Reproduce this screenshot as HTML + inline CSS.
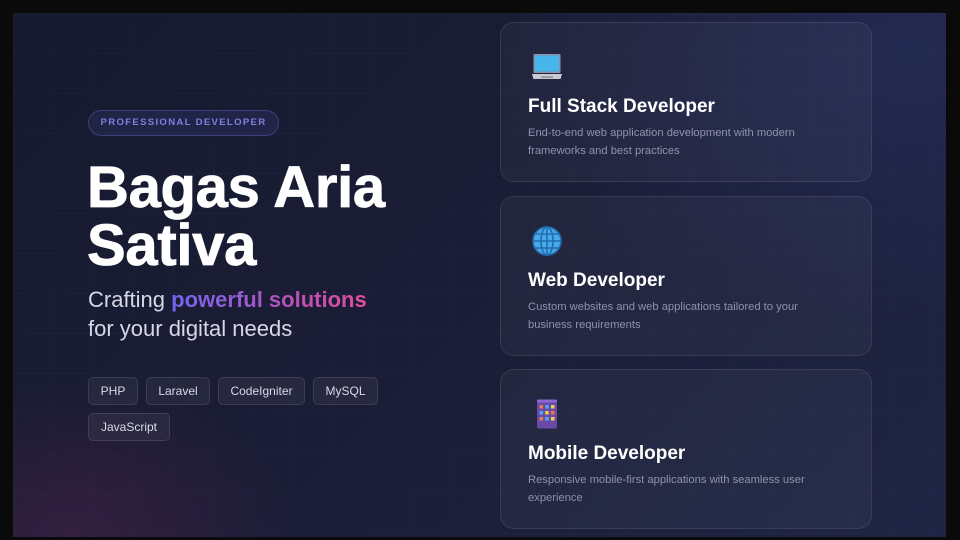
<!DOCTYPE html>
<html><head><meta charset="utf-8"><style>
*{margin:0;padding:0;box-sizing:border-box}
html,body{width:960px;height:540px;background:#0a0a0b;overflow:hidden;font-family:"Liberation Sans",sans-serif}
.main{position:absolute;left:13px;top:13px;width:933px;height:524px;overflow:hidden;
background:radial-gradient(ellipse 320px 220px at 60px 520px,rgba(90,35,80,.4),transparent 70%),
radial-gradient(ellipse 600px 400px at 900px 40px,rgba(40,50,100,.55),transparent 70%),
linear-gradient(135deg,#151a2e 0%,#1b1d36 50%,#1e2544 100%);}
.grid{position:absolute;inset:0;background-image:linear-gradient(rgba(255,255,255,.018) 1px,transparent 1px),linear-gradient(90deg,rgba(255,255,255,.018) 1px,transparent 1px);background-size:40px 40px}
.badge{position:absolute;left:75px;top:97px;width:191px;height:26px;border-radius:13px;border:1px solid rgba(110,115,220,.35);background:rgba(90,95,200,.14);color:#7c80e0;font-size:9.6px;font-weight:bold;letter-spacing:1.3px;text-align:center;line-height:24px;white-space:nowrap}
h1{position:absolute;left:74px;top:146px;color:#fff;font-size:58px;font-weight:bold;line-height:58px;letter-spacing:-0.3px;white-space:nowrap;-webkit-text-stroke:0.8px #fff}
.sub{position:absolute;left:75px;top:272px;color:#d6d8e6;font-size:22px;line-height:29px;white-space:nowrap}
.sub b{background:linear-gradient(90deg,#6e67f0,#c04fb0 70%,#e0509a);-webkit-background-clip:text;background-clip:text;color:transparent}
.tag{position:absolute;height:28px;border-radius:5px;border:1px solid rgba(255,255,255,.1);background:rgba(255,255,255,.05);color:#d8dae6;font-size:12px;line-height:26px;text-align:center}
.card{position:absolute;left:487px;width:372px;height:160px;border-radius:14px;border:1px solid rgba(255,255,255,.09);background:rgba(255,255,255,.04)}
.card svg{position:absolute;left:30px;top:28px}
.card h2{position:absolute;left:27px;top:73px;color:#fff;font-size:19px;font-weight:bold}
.card p{position:absolute;left:27px;top:102px;width:300px;color:#8d93ad;font-size:11.2px;line-height:17.5px}
</style></head><body>
<div class="main"><div class="grid"></div>
<div class="badge">PROFESSIONAL DEVELOPER</div>
<h1>Bagas Aria<br>Sativa</h1>
<div class="sub">Crafting <b>powerful solutions</b><br>for your digital needs</div>
<div class="tag" style="left:75px;top:364px;width:50px">PHP</div>
<div class="tag" style="left:133px;top:364px;width:64px">Laravel</div>
<div class="tag" style="left:205px;top:364px;width:87px">CodeIgniter</div>
<div class="tag" style="left:300px;top:364px;width:65px">MySQL</div>
<div class="tag" style="left:75px;top:400px;width:82px">JavaScript</div>

<div class="card" style="top:9px">
<svg width="32" height="32" viewBox="0 0 32 32"><rect x="2.5" y="3" width="27" height="19" rx="1" fill="#8a8ea8"/><rect x="4" y="4.5" width="24" height="16" fill="#47b6ea"/><path d="M1 23h30l-1.5 5h-27z" fill="#c9c9d8"/><rect x="10" y="25.5" width="12" height="1.3" fill="#888"/></svg>
<h2>Full Stack Developer</h2><p>End-to-end web application development with modern frameworks and best practices</p></div>

<div class="card" style="top:183px">
<svg width="32" height="32" viewBox="0 0 32 32" fill="none" stroke="#1f6fb0" stroke-width="1.6"><circle cx="16" cy="16" r="14" fill="#4aa8e8"/><ellipse cx="16" cy="16" rx="6" ry="14"/><path d="M16 2v28M2 16h28M4.5 9h23M4.5 23h23"/></svg>
<h2>Web Developer</h2><p>Custom websites and web applications tailored to your business requirements</p></div>

<div class="card" style="top:356px">
<svg width="32" height="32" viewBox="0 0 32 32"><rect x="6" y="1.5" width="20" height="29" rx="2" fill="#6a4aa8"/><rect x="6" y="1.5" width="20" height="3" rx="1" fill="#8a6ad0"/>
<g><rect x="8.5" y="7" width="3.5" height="3.5" fill="#f07a50"/><rect x="14.2" y="7" width="3.5" height="3.5" fill="#50a8f0"/><rect x="20" y="7" width="3.5" height="3.5" fill="#f0d050"/>
<rect x="8.5" y="13" width="3.5" height="3.5" fill="#50a8f0"/><rect x="14.2" y="13" width="3.5" height="3.5" fill="#f0d050"/><rect x="20" y="13" width="3.5" height="3.5" fill="#f07a50"/>
<rect x="8.5" y="19" width="3.5" height="3.5" fill="#f07a50"/><rect x="14.2" y="19" width="3.5" height="3.5" fill="#50a8f0"/><rect x="20" y="19" width="3.5" height="3.5" fill="#f0d050"/></g></svg>
<h2>Mobile Developer</h2><p>Responsive mobile-first applications with seamless user experience</p></div>
</div>
</body></html>
